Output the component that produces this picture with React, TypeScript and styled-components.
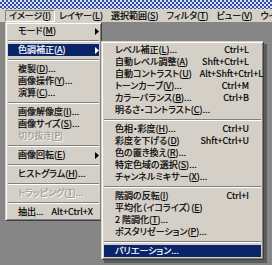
import React from 'react';
import styled, { createGlobalStyle } from 'styled-components';

const GlobalStyle = createGlobalStyle`
  html, body {
    margin: 0;
    padding: 0;
    background: #868686;
  }
  body {
    font-family: "Noto Sans CJK JP", "Liberation Sans", sans-serif;
    font-size: 9px;
    font-feature-settings: "palt";
    -webkit-text-stroke: 0.2px currentColor;
  }
`;

const Screen = styled.div`
    position: relative;
    width: 272px;
    height: 265px;
    overflow: hidden;
    background: #868686;
`;

const TitleStrip = styled.div`
    height: 9px;
    background-color: #2f4fa3;
    background-image: repeating-conic-gradient(#2f4fa3 0% 25%, #d6def0 0% 50%);
    background-size: 4px 4px;
`;

const MenuBar = styled.div`
    display: flex;
    align-items: stretch;
    height: 13px;
    padding-left: 5px;
    background: #d4d0c8;
    white-space: nowrap;
    overflow: hidden;
`;

const MenuTitle = styled.div<{ $open?: boolean }>`
    display: flex;
    align-items: center;
    flex-shrink: 0;
    padding: 0 3px;
    margin-top: 1px;
    line-height: 12px;
    color: #000;
    border: 1px solid transparent;
    border-color: ${({ $open }) => ($open ? '#808080 #ffffff #ffffff #808080' : 'transparent')};
`;

const Dropdown = styled.div<{ $left: number; $top: number; $width: number; $shadow?: boolean }>`
    position: absolute;
    left: ${({ $left }) => $left}px;
    top: ${({ $top }) => $top}px;
    width: ${({ $width }) => $width}px;
    box-sizing: border-box;
    padding: 2px;
    background: #d4d0c8;
    border: 1px solid;
    border-color: #d4d0c8 #404040 #404040 #d4d0c8;
    box-shadow: inset 1px 1px 0 #ffffff, inset -1px -1px 0 #808080
        ${({ $shadow }) => ($shadow ? ', 3px 3px 0 rgba(0, 0, 0, 0.3)' : '')};
`;

const Row = styled.div<{ $active?: boolean; $disabled?: boolean; $indent: number; $right: number }>`
    display: flex;
    align-items: center;
    height: 12px;
    line-height: 12px;
    padding-left: ${({ $indent }) => $indent}px;
    padding-right: ${({ $right }) => $right}px;
    white-space: nowrap;
    background: ${({ $active }) => ($active ? '#0a246a' : 'transparent')};
    color: ${({ $active, $disabled }) => ($active ? '#ffffff' : $disabled ? '#a09c94' : '#000000')};
    text-shadow: ${({ $disabled }) => ($disabled ? '1px 1px 0 #ffffff' : 'none')};
`;

const Label = styled.span`
    flex: 1;
`;

const Shortcut = styled.span`
    margin-left: 8px;
`;

const Key = styled.span`
    text-decoration: underline;
    text-underline-offset: 1px;
`;

const ArrowSlot = styled.span`
    position: relative;
    display: flex;
    align-items: center;
    align-self: stretch;
`;

const Arrow = styled.svg`
    position: absolute;
    right: -9px;
    width: 4px;
    height: 7px;
    fill: currentColor;
`;

const Separator = styled.div`
    height: 7px;
    display: flex;
    align-items: center;

    &::before {
        content: '';
        flex: 1;
        border-top: 1px solid #808080;
        border-bottom: 1px solid #ffffff;
    }
`;

type Item =
    | 'sep'
    | {
          label: string;
          key?: string;
          dots?: boolean;
          shortcut?: string;
          arrow?: boolean;
          active?: boolean;
          disabled?: boolean;
      };

const imageMenu: Item[] = [
    { label: 'モード', key: 'M', arrow: true },
    'sep',
    { label: '色調補正', key: 'A', arrow: true, active: true },
    'sep',
    { label: '複製', key: 'D', dots: true },
    { label: '画像操作', key: 'Y', dots: true },
    { label: '演算', key: 'C', dots: true },
    'sep',
    { label: '画像解像度', key: 'I', dots: true },
    { label: '画像サイズ', key: 'S', dots: true },
    { label: '切り抜き', key: 'P', disabled: true },
    'sep',
    { label: '画像回転', key: 'E', arrow: true },
    'sep',
    { label: 'ヒストグラム', key: 'H', dots: true },
    'sep',
    { label: 'トラッピング', key: 'T', dots: true, disabled: true },
    'sep',
    { label: '抽出...', shortcut: 'Alt+Ctrl+X' },
];

const adjustMenu: Item[] = [
    { label: 'レベル補正', key: 'L', dots: true, shortcut: 'Ctrl+L' },
    { label: '自動レベル調整', key: 'A', shortcut: 'Shft+Ctrl+L' },
    { label: '自動コントラスト', key: 'U', shortcut: 'Alt+Shft+Ctrl+L' },
    { label: 'トーンカーブ', key: 'V', dots: true, shortcut: 'Ctrl+M' },
    { label: 'カラーバランス', key: 'B', dots: true, shortcut: 'Ctrl+B' },
    { label: '明るさ・コントラスト', key: 'C', dots: true },
    'sep',
    { label: '色相・彩度', key: 'H', dots: true, shortcut: 'Ctrl+U' },
    { label: '彩度を下げる', key: 'D', shortcut: 'Shft+Ctrl+U' },
    { label: '色の置き換え', key: 'R', dots: true },
    { label: '特定色域の選択', key: 'S', dots: true },
    { label: 'チャンネルミキサー', key: 'X', dots: true },
    'sep',
    { label: '階調の反転', key: 'I', shortcut: 'Ctrl+I' },
    { label: '平均化（イコライズ）', key: 'E' },
    { label: '2 階調化', key: 'T', dots: true },
    { label: 'ポスタリゼーション', key: 'P', dots: true },
    'sep',
    { label: 'バリエーション...', active: true },
];

const menuTitles = [
    { label: 'イメージ', key: 'I', open: true },
    { label: 'レイヤー', key: 'L' },
    { label: '選択範囲', key: 'S' },
    { label: 'フィルタ', key: 'T' },
    { label: 'ビュー', key: 'V' },
    { label: 'ウイン', key: '' },
];

function MenuList({ items, indent, right }: { items: Item[]; indent: number; right: number }) {
    return (
        <>
            {items.map((item, i) =>
                item === 'sep' ? (
                    <Separator key={i} />
                ) : (
                    <Row key={i} $active={item.active} $disabled={item.disabled} $indent={indent} $right={right}>
                        <Label>
                            {item.label}
                            {item.key && (
                                <>
                                    (<Key>{item.key}</Key>)
                                </>
                            )}
                            {item.dots && '...'}
                        </Label>
                        {item.shortcut && <Shortcut>{item.shortcut}</Shortcut>}
                        {item.arrow && (
                            <ArrowSlot>
                                <Arrow viewBox="0 0 4 7">
                                    <polygon points="0,0 4,3.5 0,7" />
                                </Arrow>
                            </ArrowSlot>
                        )}
                    </Row>
                )
            )}
        </>
    );
}

export default function App() {
    return (
        <>
            <GlobalStyle />
            <Screen>
                <TitleStrip />
                <MenuBar>
                    {menuTitles.map((t) => (
                        <MenuTitle key={t.label} $open={t.open}>
                            {t.label}
                            {t.key && (
                                <>
                                    (<Key>{t.key}</Key>)
                                </>
                            )}
                        </MenuTitle>
                    ))}
                </MenuBar>
                <Dropdown $left={5} $top={22} $width={97}>
                    <MenuList items={imageMenu} indent={10} right={9} />
                </Dropdown>
                <Dropdown $left={101} $top={41} $width={163} $shadow>
                    <MenuList items={adjustMenu} indent={11} right={12} />
                </Dropdown>
            </Screen>
        </>
    );
}
